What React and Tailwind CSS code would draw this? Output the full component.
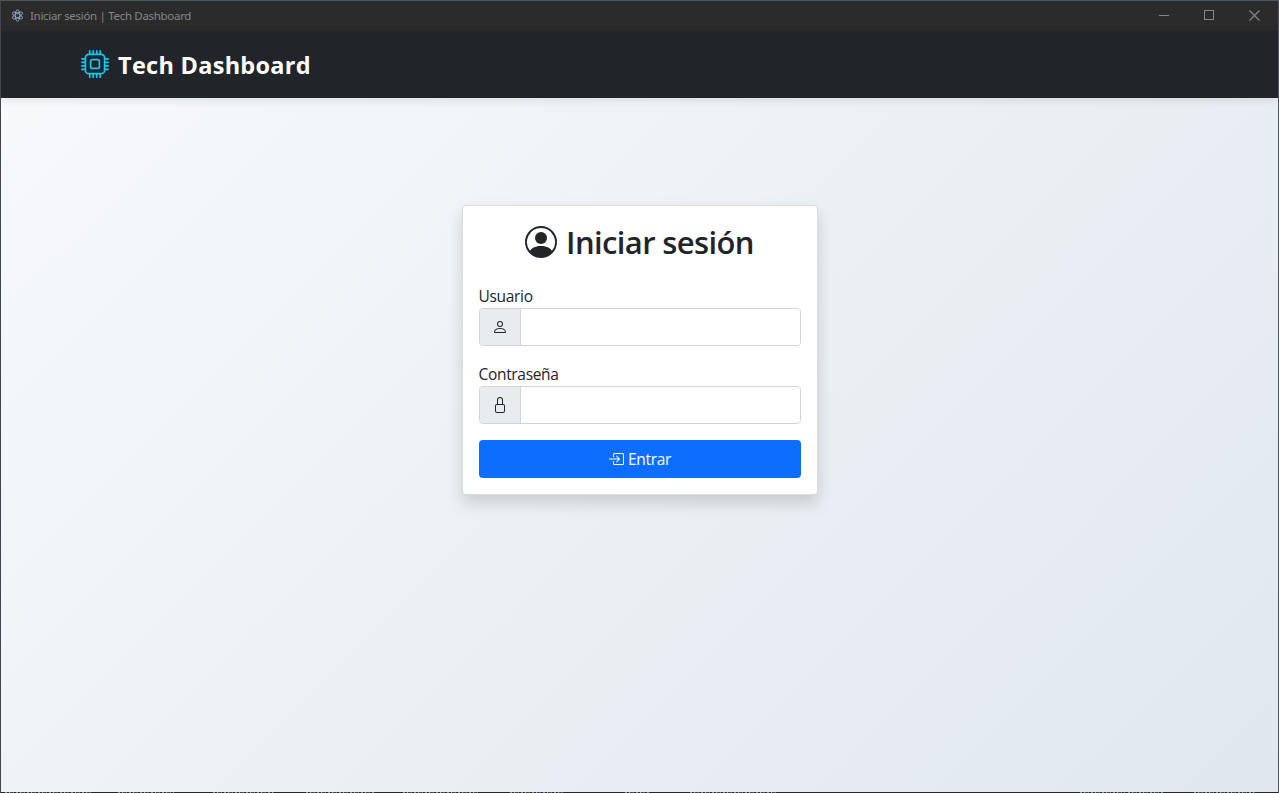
import React from "react";
import { BsCpu, BsPersonCircle, BsPerson, BsLock, BsBoxArrowInRight } from "react-icons/bs";

function AppMark() {
  return (
    <svg width="13" height="13" viewBox="0 0 24 24" fill="none" stroke="#a3bdc7" strokeWidth="1.4" className="shrink-0">
      <circle cx="12" cy="12" r="12" fill="#2b3040" stroke="none" />
      <ellipse cx="12" cy="12" rx="10.5" ry="4" transform="rotate(30 12 12)" />
      <ellipse cx="12" cy="12" rx="10.5" ry="4" transform="rotate(90 12 12)" />
      <ellipse cx="12" cy="12" rx="10.5" ry="4" transform="rotate(150 12 12)" />
    </svg>
  );
}

function TitleBar() {
  return (
    <div className="flex h-[30px] shrink-0 items-center justify-between bg-[#2b2b2b] text-[#868686]">
      <div className="flex items-center gap-[6px] pb-px pl-[10px]">
        <AppMark />
        <span className="font-['Noto_Sans','Open_Sans',sans-serif] text-[11.5px] leading-[16px] tracking-[-0.31px]">Iniciar sesión | Tech Dashboard</span>
      </div>
      <div className="flex h-full">
        <span className="flex w-[46px] items-center justify-center">
          <svg width="10" height="10" shapeRendering="crispEdges"><path d="M0 4.5h10" stroke="#868686" /></svg>
        </span>
        <span className="flex w-[44px] items-center justify-center pb-[2px]">
          <svg width="10" height="10" shapeRendering="crispEdges"><rect x=".5" y=".5" width="9" height="9" fill="none" stroke="#868686" /></svg>
        </span>
        <span className="flex w-[47px] items-center justify-center pb-[1px]">
          <svg width="11" height="11"><path d="M.5 .5l10 10M10.5 .5L.5 10.5" stroke="#868686" strokeWidth="1.2" /></svg>
        </span>
      </div>
    </div>
  );
}

function Field({ label, type, icon: Icon }) {
  return (
    <div className="mb-4">
      <label className="block h-6 text-[15.5px] leading-6 tracking-[-0.32px]">{label}</label>
      <div className="flex h-[38px] overflow-hidden rounded-[4px] border border-[#ced4da]">
        <span className="flex w-[41px] shrink-0 items-center justify-center border-r border-[#ced4da] bg-[#e9ecef]">
          <Icon size={16} />
        </span>
        <input type={type} aria-label={label} className="min-w-0 flex-1 bg-white px-3 outline-none" />
      </div>
    </div>
  );
}

// Gap before and width of each light run along the window's bottom edge.
const edgeRuns = [
  [4, 86], [27, 56], [39, 61], [32, 70], [27, 77], [30, 53], [62, 25], [40, 88], [302, 45], [3, 36], [30, 61],
];

function BottomEdge() {
  return (
    <div className="flex h-px shrink-0 bg-[#262626]">
      {edgeRuns.map(([gap, width], i) => (
        <span
          key={i}
          className="h-px shrink-0 bg-[repeating-linear-gradient(90deg,#8e918c_0_2px,#2c2c2c_2px_4px,#a8a9a4_4px_5px,#3d4450_5px_8px,#77756a_8px_9px,#262626_9px_11px)]"
          style={{ marginLeft: gap, width }}
        />
      ))}
    </div>
  );
}

export default function App() {
  return (
    <div className="flex h-[793px] w-[1279px] flex-col overflow-hidden border border-b-0 border-t-[#4c5560] border-r-[#4c5560] border-l-[#3f4650] font-['Open_Sans','Noto_Sans',sans-serif] text-[#212529]">
      <TitleBar />
      <div className="flex flex-1 flex-col bg-[linear-gradient(135deg,#f8fafc_0%,#e0e7ef_100%)]">
        <header className="flex h-[67px] shrink-0 items-center gap-[9px] bg-[#212529] pb-[2px] pl-[80px] shadow-[0_2px_10px_rgba(0,0,0,0.1)]">
          <BsCpu size={28} color="#0dcaf0" />
          <span className="pt-[2px] text-[23.5px] leading-9 font-bold tracking-[0.28px] text-white">Tech Dashboard</span>
        </header>
        <main className="flex flex-1 items-start justify-center pt-[107px]">
          <form className="w-[356px] rounded-[4px] border border-[#d9dcdf] bg-white px-4 pt-4 pb-4 shadow-[0_8px_16px_rgba(0,0,0,0.15)]">
            <h1 className="mb-6 flex h-[38px] items-center justify-center gap-[9px] pt-px text-[31px] leading-[37px] font-semibold tracking-[-0.62px]">
              <BsPersonCircle size={32} />
              <span className="pt-[2px]">Iniciar sesión</span>
            </h1>
            <Field label="Usuario" type="text" icon={BsPerson} />
            <Field label="Contraseña" type="password" icon={BsLock} />
            <button type="button" className="flex h-[38px] w-full items-center justify-center gap-[4px] rounded-[4px] bg-[#0d6efd] text-[15.5px] tracking-[-0.35px] text-white">
              <BsBoxArrowInRight size={16} />
              <span className="pt-px">Entrar</span>
            </button>
          </form>
        </main>
      </div>
      <BottomEdge />
    </div>
  );
}
